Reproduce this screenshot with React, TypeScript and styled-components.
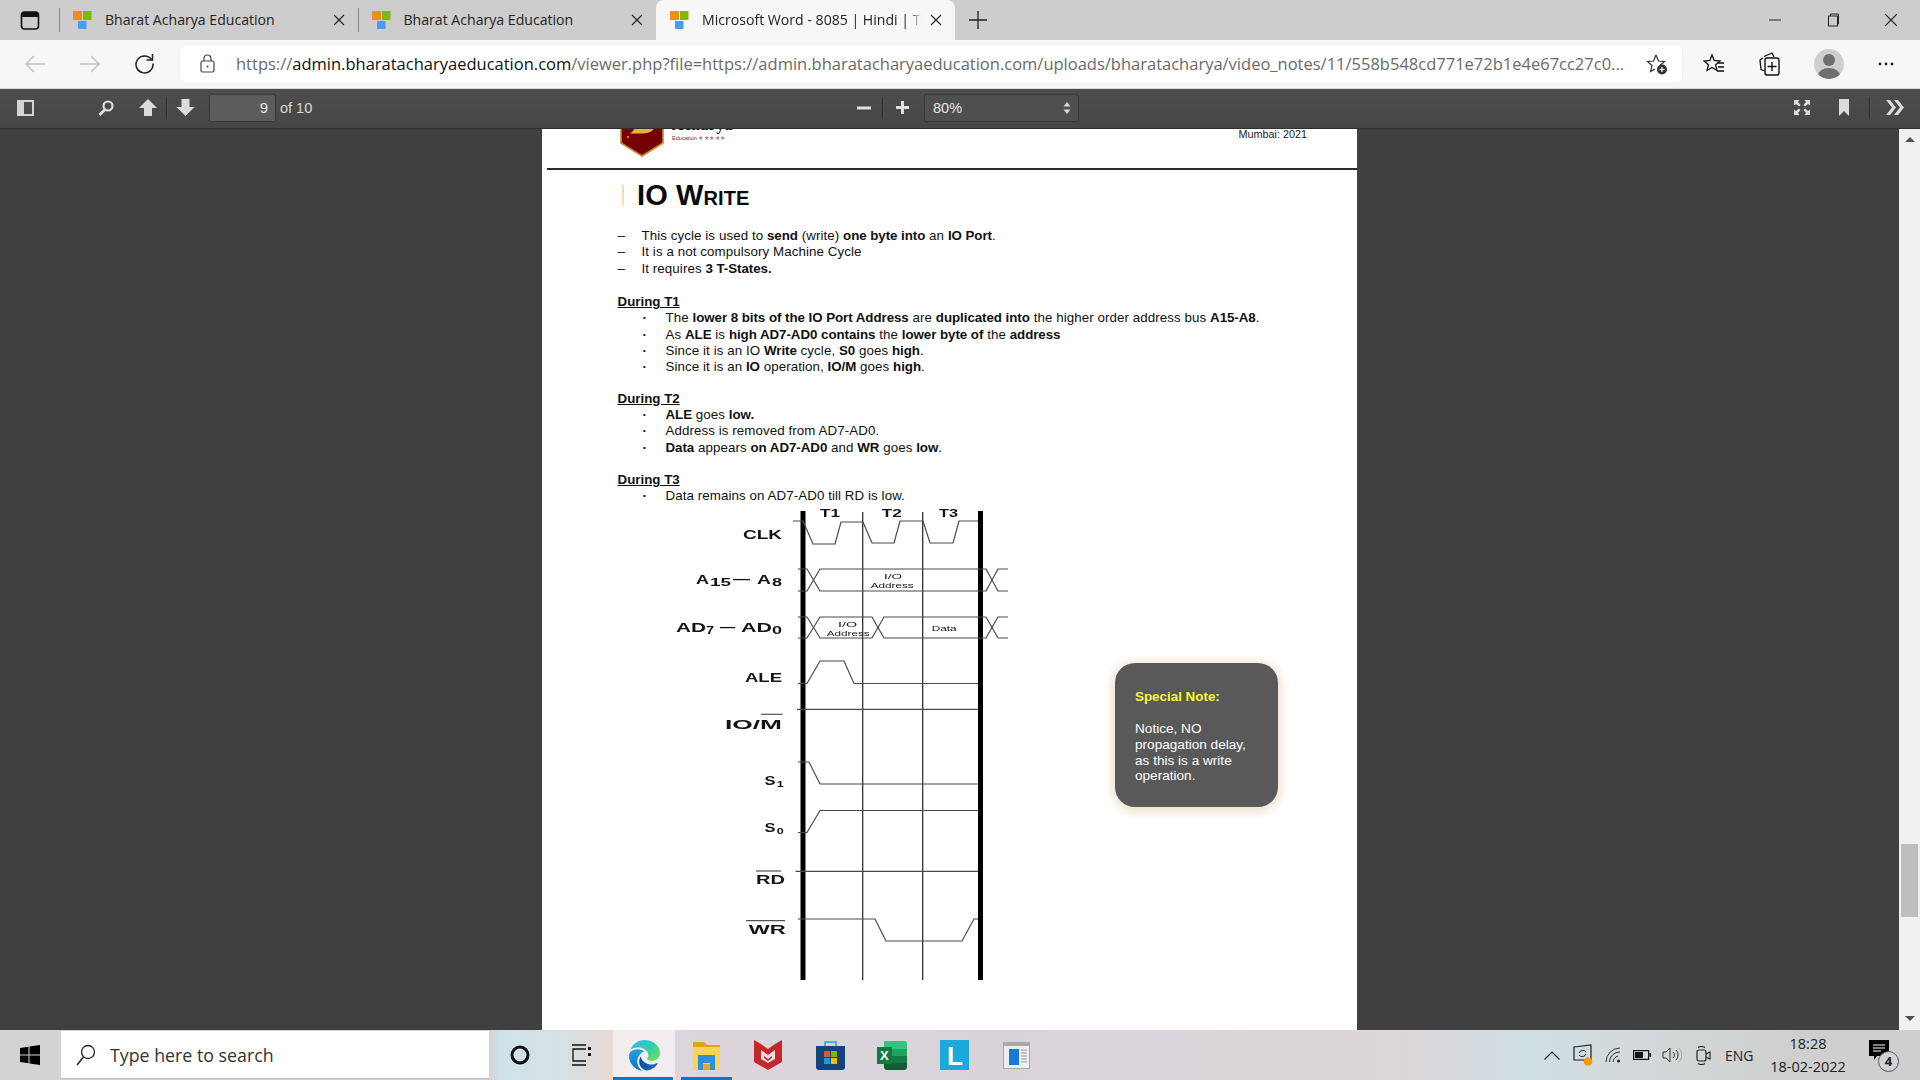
import React from "react";
import styled, { createGlobalStyle } from "styled-components";

const Global = createGlobalStyle`
  html, body { margin: 0; padding: 0; background: #404040; }
  * { box-sizing: border-box; }
`;

const Shell = styled.div`
  width: 1920px; height: 1080px; overflow: hidden; display: flex; flex-direction: column;
  font-family: "Open Sans", "Noto Sans", sans-serif; color: #111;
`;

/* ---------- tab strip ---------- */
const TabStrip = styled.div`
  height: 40px; flex: none; background: #cdcdcd; display: flex; align-items: stretch;
`;
const TabMenu = styled.div`
  width: 59px; flex: none; display: flex; align-items: center; padding-left: 20px;
  border-right: 1px solid transparent;
`;
const Tab = styled.div<{ $active?: boolean }>`
  width: 298.5px; flex: none; display: flex; align-items: center; padding: 0 13px 0 14px;
  background: ${(p) => (p.$active ? "#f7f7f7" : "transparent")};
  border-radius: ${(p) => (p.$active ? "8px 8px 0 0" : "0")};
  position: relative;
  ${(p) => (p.$active ? "" : "&::before { content: ''; position: absolute; left: 0; top: 8px; bottom: 8px; width: 1px; background: #8a8a8a; }")}
`;
const TabTitle = styled.div<{ $fade?: boolean }>`
  flex: 1; margin-left: 13px; font-size: 14.1px; white-space: nowrap; overflow: hidden; color: #222; line-height: 40px;
  ${(p) => (p.$fade ? "mask-image: linear-gradient(90deg, #000 94%, transparent 100%); margin-right: 8px;" : "")}
`;
const NewTab = styled.div`
  width: 40px; margin-left: 3px; display: flex; align-items: center; justify-content: center;
`;
const WindowControls = styled.div`
  margin-left: auto; display: flex; align-items: center; padding-right: 0;
`;
const WindowButton = styled.div`
  width: 58px; height: 40px; display: flex; align-items: center; justify-content: center;
`;

/* ---------- address row ---------- */
const AddressRow = styled.div`
  height: 49px; flex: none; background: #f7f7f7; display: flex; align-items: center;
  padding-bottom: 1px; border-bottom: 1px solid #dcdcdc;
`;
const NavButton = styled.div<{ $w: number; $ml: number }>`
  width: ${(p) => p.$w}px; margin-left: ${(p) => p.$ml}px; flex: none; display: flex; align-items: center; justify-content: center;
`;
const Omnibox = styled.div`
  width: 1502px; height: 38px; margin-left: 25px; flex: none; background: #fff; border-radius: 5px;
  display: flex; align-items: center; box-shadow: 0 0 3px rgba(0,0,0,.08);
`;
const UrlText = styled.div`
  margin-left: 21px; width: 1396px; flex: none; font-size: 16.5px; white-space: nowrap; overflow: hidden; color: #6a6a6a;
`;
const UrlHost = styled.span`
  color: #111;
`;
const Avatar = styled.div`
  width: 30px; height: 30px; margin-left: 33px; border-radius: 50%; background: #cfcfcf; flex: none; display: flex; align-items: center; justify-content: center; overflow: hidden;
`;

/* ---------- pdf toolbar ---------- */
const Toolbar = styled.div`
  height: 40px; flex: none; display: grid; grid-template-columns: 856px 224px 1fr; align-items: center; padding-bottom: 2px;
  background: linear-gradient(#4d4d4d, #464646); border-bottom: 1px solid #2f2f2f; color: #d9d9d9; font-family: "Liberation Sans", Arial, sans-serif;
`;
const ToolGroup = styled.div<{ $end?: boolean }>`
  display: flex; align-items: center; height: 100%;
  ${(p) => (p.$end ? "justify-content: flex-end; padding-right: 16px;" : "")}
`;
const ToolIcon = styled.div<{ $ml: number }>`
  margin-left: ${(p) => p.$ml}px; display: flex; align-items: center; flex: none;
`;
const ToolSep = styled.div<{ $ml: number }>`
  width: 1px; height: 22px; background: #2e2e2e; box-shadow: 1px 0 0 rgba(255,255,255,.06); margin-left: ${(p) => p.$ml}px; flex: none;
`;
const PageInput = styled.div`
  width: 67px; height: 28px; margin-left: 14px; background: #5c5c5c; border: 1px solid #383838; border-radius: 2px;
  font-size: 15px; text-align: right; line-height: 26px; padding-right: 7px; flex: none; color: #e2e2e2;
`;
const PageCount = styled.div`
  margin-left: 4px; font-size: 14.5px;
`;
const ZoomSelect = styled.div`
  width: 155px; height: 28px; margin-left: 15px; background: #4f4f4f; border: 1px solid #383838; border-radius: 2px;
  display: flex; align-items: center; justify-content: space-between; padding: 0 7px 0 8px; font-size: 14.5px; color: #e6e6e6; flex: none;
`;

/* ---------- viewer ---------- */
const Viewer = styled.div`
  flex: 1; min-height: 0; display: flex; background: #404040;
`;
const PageArea = styled.div`
  flex: 1; display: flex; justify-content: center; min-width: 0;
`;
const Page = styled.div`
  width: 815px; background: #fff; overflow: hidden; font-family: "Liberation Sans", Arial, sans-serif; color: #111;
`;
const ScrollBar = styled.div`
  width: 21px; flex: none; background: #f1f1f1; display: flex; flex-direction: column; align-items: center; padding: 8px 0 9px;
`;
const ScrollThumb = styled.div`
  width: 17px; height: 73px; background: #bebebe; margin-top: 702px;
`;
const ScrollArrow = styled.div<{ $down?: boolean }>`
  width: 0; height: 0; border-left: 5px solid transparent; border-right: 5px solid transparent;
  ${(p) => (p.$down ? "border-top: 5px solid #505050; margin-top: auto;" : "border-bottom: 5px solid #505050;")}
`;

const PageHeader = styled.div`
  height: 39px; display: flex; overflow: hidden; padding-left: 78px;
`;
const Brand = styled.div`
  margin-left: 8px; display: flex; flex-direction: column; width: 200px;
`;
const BrandName = styled.div`
  height: 3px; display: flex; align-items: flex-end; font-family: "Liberation Serif", serif; font-weight: 700; font-size: 16px; line-height: 14px; color: #111; letter-spacing: .3px;
`;
const BrandSub = styled.div`
  font-size: 5.6px; line-height: 6px; margin-top: 3px; color: #7c1b2f; white-space: nowrap;
`;
const BrandStars = styled.span`
  color: #a77; letter-spacing: .4px;
`;
const Edition = styled.div`
  margin-left: auto; margin-right: 50px; font-size: 10.8px; line-height: 11px; margin-top: 0; color: #222;
`;
const HeaderRule = styled.div`
  height: 2px; margin-left: 5px; background: #2b2b2b;
`;
const TitleRow = styled.div`
  display: flex; align-items: center; margin: 11px 0 0 80px; height: 28px;
`;
const TitleBar = styled.div`
  width: 2px; height: 21px; background: #fbdcae; flex: none;
`;
const Title = styled.h1`
  margin: 0 0 0 13px; font-size: 29px; line-height: 28px; font-weight: 700; font-variant: small-caps; color: #0a0a0a; letter-spacing: .1px;
`;
const Section = styled.div<{ $mt: number }>`
  margin-top: ${(p) => p.$mt}px; padding-left: 75.500px; font-size: 13.33px; line-height: 16.4px; letter-spacing: .08px;
`;
const SectionHead = styled.div`
  font-weight: 700; text-decoration: underline; line-height: 16px; letter-spacing: 0;
`;
const Line = styled.div<{ $kind: "dash" | "dot" }>`
  display: flex; white-space: pre;
  padding-left: ${(p) => (p.$kind === "dash" ? "0" : "25px")};
  &::before {
    content: "${(p) => (p.$kind === "dash" ? "–" : "·")}";
    width: ${(p) => (p.$kind === "dash" ? "24px" : "23px")};
    flex: none;
    font-weight: ${(p) => (p.$kind === "dot" ? 700 : 400)};
  }
`;
const LineText = styled.span`
  white-space: pre;
`;
const DiagramRow = styled.div`
  display: flex; align-items: flex-start; padding-left: 118px;
`;
const Diagram = styled.svg`
  width: 380px; height: 480px; flex: none; display: block; filter: blur(.3px);
`;
const Wave = styled.polyline<{ $w?: number; $c?: string }>`
  fill: none; stroke: ${(p) => p.$c ?? "#4a4a4a"}; stroke-width: ${(p) => p.$w ?? 1.2};
`;
const DiagramLabel = styled.text<{ $size?: number; $weight?: number }>`
  font-family: "Liberation Sans", Arial, sans-serif; font-size: ${(p) => p.$size ?? 12.5}px; font-weight: ${(p) => p.$weight ?? 700}; fill: #141414;
`;
const Note = styled.div`
  width: 163px; height: 144px; margin: 159px 0 0 75px; flex: none; background: #595959; border-radius: 20px;
  box-shadow: 0 2px 8px 4px #efe6d6; padding: 26px 20px 0 20px; color: #fff; font-size: 13.6px; line-height: 15.7px;
`;
const NoteTitle = styled.div`
  color: #f6f83a; font-weight: 700; margin-bottom: 16px; font-size: 13.4px;
`;

/* ---------- taskbar ---------- */
const Taskbar = styled.div`
  height: 50px; flex: none; display: flex; align-items: stretch;
  background: linear-gradient(90deg, #d3d3d3 0, #d3d3d3 489px, #cfe2ea 500px, #d6e0e2 560px, #e6d9d7 610px, #ddd6dc 680px, #d8d4da 1000px, #dcd6da 1250px, #ddd6da 1400px, #cfe0e4 1530px, #d3dadb 1620px, #cfcfcf 1800px, #cfcfcf 1920px);
`;
const StartButton = styled.div`
  width: 61px; flex: none; display: flex; align-items: center; justify-content: center; padding-right: 1px;
`;
const SearchBox = styled.div`
  width: 428px; flex: none; margin: 1px 0; background: #fff; display: flex; align-items: center; padding-left: 15px; border-bottom: 1px solid #bbb;
`;
const SearchText = styled.div`
  margin-left: 14px; font-size: 17.8px; color: #333;
`;
const TaskCell = styled.div<{ $active?: boolean; $open?: boolean }>`
  width: 62px; flex: none; display: flex; align-items: center; justify-content: center; position: relative;
  background: ${(p) => (p.$active ? "rgba(255,255,255,.55)" : "transparent")};
  ${(p) => (p.$active || p.$open ? `&::after { content: ''; position: absolute; left: ${p.$open ? 6 : 0}px; right: ${p.$open ? 5 : 2}px; bottom: 0; height: 3px; background: #0078d4; }` : "")}
`;
const Tray = styled.div`
  margin-left: auto; display: flex; align-items: center; padding-right: 19px; color: #222;
`;
const TrayIcon = styled.div<{ $ml: number }>`
  margin-left: ${(p) => p.$ml}px; display: flex; align-items: center; flex: none; position: relative;
`;
const TrayText = styled.div`
  margin-left: 14px; font-size: 14px; width: 28px; white-space: nowrap;
`;
const Clock = styled.div`
  margin-left: 15px; width: 80px; text-align: center; font-size: 14.5px; line-height: 23px;
`;
const Notify = styled.div`
  margin-left: 21px; width: 32px; height: 40px; position: relative; flex: none;
`;
const NotifyBadge = styled.div`
  position: absolute; left: 9px; top: 16px; width: 21px; height: 21px; border-radius: 50%; border: 1px solid #555; background: #d3d3d3;
  font-size: 13px; font-weight: 700; line-height: 19px; text-align: center; color: #222;
`;

/* ---------- icons ---------- */
const Favicon = () => (
  <svg width="19" height="18" viewBox="0 0 19 18">
    <rect x="0" y="0" width="9" height="9" fill="#f58a1f" />
    <rect x="10" y="0" width="8.5" height="9" fill="#7fba00" />
    <rect x="5" y="10" width="8.5" height="8" fill="#4a9cf0" />
  </svg>
);
const CloseX = ({ s = 12, c = "#222" }: { s?: number; c?: string }) => (
  <svg width={s} height={s} viewBox="0 0 12 12"><path d="M1 1l10 10M11 1L1 11" stroke={c} strokeWidth="1.1" fill="none" /></svg>
);
const Arrow = ({ flip }: { flip?: boolean }) => (
  <svg width="22" height="20" viewBox="0 0 22 20" style={flip ? { transform: "scaleX(-1)" } : undefined}>
    <path d="M21 10H2M10 2l-8 8 8 8" stroke="#c4c4c4" strokeWidth="1.5" fill="none" />
  </svg>
);

const EdgeIcon = () => (
  <svg width="31" height="31" viewBox="0 0 24 24">
    <defs>
      <linearGradient id="eg1" x1="0" y1="0" x2="1" y2=".9"><stop offset="0" stopColor="#2bb6ee" /><stop offset=".55" stopColor="#33cfae" /><stop offset="1" stopColor="#72e04c" /></linearGradient>
      <linearGradient id="eg2" x1="0" y1="0" x2="0" y2="1"><stop offset="0" stopColor="#1ca4ea" /><stop offset="1" stopColor="#1070c8" /></linearGradient>
      <linearGradient id="eg3" x1="0" y1="0" x2="1" y2="0"><stop offset="0" stopColor="#0d4f9c" /><stop offset="1" stopColor="#1a70c4" /></linearGradient>
    </defs>
    <path fill="url(#eg3)" d="M21.86 17.86q.14 0 .25.12.1.13.1.25t-.11.33l-.32.46-.43.53-.44.5q-.21.25-.38.42l-.22.23q-.58.53-1.34 1.04-.76.51-1.6.91-.86.4-1.74.64t-1.67.24q-.9 0-1.69-.28-.8-.28-1.48-.78-.68-.5-1.22-1.17-.53-.66-.92-1.44-.38-.77-.58-1.6-.2-.83-.2-1.67 0-1 .32-1.96.33-.97.87-1.8.14.95.55 1.77.41.82 1.02 1.5.6.68 1.38 1.21.78.54 1.64.9.86.36 1.77.56.92.2 1.8.2 1.12 0 2.18-.24 1.06-.23 2.06-.72l.2-.1.2-.05z" />
    <path fill="url(#eg2)" d="M6.360 16.590q0 1.1.27 2.15.27 1.06.78 2.03.51.96 1.24 1.77.74.82 1.66 1.4-1.47-.2-2.8-.74-1.33-.55-2.48-1.37-1.15-.83-2.08-1.9-.92-1.07-1.58-2.33T.36 14.94Q0 13.54 0 12.06q0-.81.32-1.49.31-.68.83-1.23.53-.55 1.2-.96.66-.4 1.35-.66.74-.27 1.5-.39.78-.12 1.55-.12.7 0 1.42.1.72.12 1.4.35.68.23 1.32.57.63.35 1.16.83-.35 0-.7.07-.33.07-.65.23v-.02q-.63.28-1.2.74-.57.46-1.05 1.04-.48.58-.87 1.26-.38.67-.65 1.39-.27.71-.42 1.44-.15.72-.15 1.38z" />
    <path fill="url(#eg1)" d="M11.96.06q1.7 0 3.33.39 1.63.38 3.07 1.15 1.43.77 2.62 1.93 1.18 1.16 1.98 2.7.49.94.76 1.96.28 1 .28 2.08 0 .89-.23 1.7-.24.8-.69 1.48-.45.68-1.1 1.22-.64.53-1.45.88-.54.24-1.11.36-.58.13-1.16.13-.42 0-.97-.03-.54-.03-1.1-.12-.55-.1-1.05-.28-.5-.19-.84-.5-.12-.09-.23-.24-.1-.16-.1-.33 0-.15.16-.35.16-.2.35-.5.2-.28.36-.68.16-.4.16-.95 0-1.06-.4-1.96-.4-.91-1.06-1.64-.66-.74-1.52-1.28-.86-.55-1.79-.89-.84-.3-1.72-.44-.87-.14-1.76-.14-1.55 0-3.06.45T.94 7.55q.71-1.74 1.81-3.13 1.1-1.38 2.52-2.35Q6.68 1.1 8.37.58q1.7-.52 3.58-.52z" />
  </svg>
);
const FolderIcon = () => (
  <svg width="27" height="29" viewBox="0 0 27 29">
    <path d="M0 1h11l3 3h13v5H0z" fill="#e0a21a" />
    <path d="M0 6h27v23H0z" fill="#fbd25a" />
    <path d="M5 14h17v15h-5v-7h-7v7H5z" fill="#2f8fe0" />
    <path d="M10 23h7v6h-7z" fill="#e8a914" />
  </svg>
);
const McAfeeIcon = () => (
  <svg width="28" height="30" viewBox="0 0 28 30">
    <path d="M0 0l7 4 7 5 7-5 7-4v22l-14 8-14-8z" fill="#c3282d" />
    <path d="M7 10l7 5 7-5v9l-7 4-7-4z" fill="#e9dfe2" />
    <path d="M10 16l4 3 4-3v2l-4 3-4-3z" fill="#c3282d" />
  </svg>
);
const StoreIcon = () => (
  <svg width="29" height="30" viewBox="0 0 29 30">
    <path d="M9 6V2h11v4" fill="none" stroke="#3fb4e6" strokeWidth="2" />
    <path d="M0 6h29v21a3 3 0 0 1-3 3H3a3 3 0 0 1-3-3z" fill="#17427a" />
    <rect x="8" y="11" width="6" height="6" fill="#e8552d" />
    <rect x="15" y="11" width="6" height="6" fill="#7fba00" />
    <rect x="8" y="18" width="6" height="6" fill="#0f9de0" />
    <rect x="15" y="18" width="6" height="6" fill="#ffb900" />
  </svg>
);
const ExcelGlyph = styled.text`
  font-family: "Liberation Sans", sans-serif; font-size: 13px; font-weight: 700; fill: #fff;
`;
const ExcelIcon = () => (
  <svg width="30" height="29" viewBox="0 0 30 29">
    <path d="M7 0h20a3 3 0 0 1 3 3v5H7z" fill="#33c481" />
    <path d="M7 8h23v7H7z" fill="#21a366" />
    <path d="M7 15h23v7H7z" fill="#107c41" />
    <path d="M7 22h23v4a3 3 0 0 1-3 3H10a3 3 0 0 1-3-3z" fill="#185c37" />
    <rect x="0" y="6" width="15" height="17" fill="#107c41" />
    <ExcelGlyph x="3" y="19">X</ExcelGlyph>
  </svg>
);
const LGlyph = styled.text`
  font-family: "Liberation Sans", sans-serif; font-size: 26px; font-weight: 700; fill: #fff;
`;
const LIcon = () => (
  <svg width="29" height="30" viewBox="0 0 29 30">
    <rect width="29" height="30" fill="#1ca8d8" />
    <LGlyph x="7" y="25">L</LGlyph>
  </svg>
);
const DocIcon = () => (
  <svg width="27" height="27" viewBox="0 0 27 27">
    <rect x=".5" y=".5" width="26" height="26" fill="#eceff0" stroke="#a8a8a8" />
    <rect x="1" y="1" width="25" height="3" fill="#a9a9a9" />
    <rect x="6" y="7" width="10" height="16" fill="#1878d8" />
    <path d="M18 8h6M18 11h6M18 14h6M18 17h6M18 20h6" stroke="#9a9a9a" />
  </svg>
);

const labelProps = (x: number, y: number, w: number) => ({ x, y, textLength: w, lengthAdjust: "spacingAndGlyphs" as const });

const TimingDiagram = () => (
  <Diagram viewBox="0 4 380 480">
    <Wave points="143,11 143,480" $w={5} $c="#000" />
    <Wave points="320.500,11 320.500,480" $w={5} $c="#000" />
    <Wave points="202.700,12 202.700,480" $w={1.3} $c="#333" />
    <Wave points="262.700,12 262.700,480" $w={1.3} $c="#333" />

    <Wave points="133,21 143,21 153,44 175,44 181,22 203,22 212,43 234,43 240,21 263,21 270,43 293,43 299,21 318,21" />
    <Wave points="138,69 147,69 160,91 318,91" />
    <Wave points="138,91 147,91 160,69 318,69" />
    <Wave points="318,69 326,69 338,91 348,91" />
    <Wave points="318,91 326,91 338,69 348,69" />
    <Wave points="138,117 147,117 160,138 212,138 224,117 318,117" />
    <Wave points="138,138 147,138 160,117 212,117 224,138 318,138" />
    <Wave points="318,117 326,117 338,138 348,138" />
    <Wave points="318,138 326,138 338,117 348,117" />
    <Wave points="138,183.500 147,183.500 160,161 184,161 194,183.500 318,183.500" />
    <Wave points="137,209.300 318,209.300" />
    <Wave points="138,262 149,262 160,284 318,284" />
    <Wave points="138,332.500 147,332.500 160,310.500 318,310.500" />
    <Wave points="135.500,371.300 318,371.300" />
    <Wave points="138,419 215,419 226,441 302,441 314,419 318,419" />

    <DiagramLabel {...labelProps(160, 16.7, 20)} $size={11}>T1</DiagramLabel>
    <DiagramLabel {...labelProps(221.7, 16.7, 20)} $size={11}>T2</DiagramLabel>
    <DiagramLabel {...labelProps(279, 16.7, 19)} $size={11}>T3</DiagramLabel>

    <DiagramLabel {...labelProps(83, 38.5, 39)} $size={13}>CLK</DiagramLabel>
    <DiagramLabel {...labelProps(36, 84, 13)} $size={13}>A</DiagramLabel>
    <DiagramLabel {...labelProps(50, 86, 21)} $size={11}>15</DiagramLabel>
    <DiagramLabel {...labelProps(73, 83, 17)}>—</DiagramLabel>
    <DiagramLabel {...labelProps(97, 84, 14)} $size={13}>A</DiagramLabel>
    <DiagramLabel {...labelProps(112, 86, 10)} $size={11}>8</DiagramLabel>
    <DiagramLabel {...labelProps(16, 132, 30)} $size={13}>AD</DiagramLabel>
    <DiagramLabel {...labelProps(46, 134, 8)} $size={11}>7</DiagramLabel>
    <DiagramLabel {...labelProps(60, 131, 15)}>—</DiagramLabel>
    <DiagramLabel {...labelProps(81, 132, 31)} $size={13}>AD</DiagramLabel>
    <DiagramLabel {...labelProps(112, 134, 10)} $size={11}>0</DiagramLabel>
    <DiagramLabel {...labelProps(85, 181.7, 37)} $size={13}>ALE</DiagramLabel>
    <DiagramLabel {...labelProps(65, 228.7, 57)} $size={13}>IO/M</DiagramLabel>
    <Wave points="101,214.300 122.700,214.300" $c="#555" />
    <DiagramLabel {...labelProps(104.5, 285, 11)} $size={13}>S</DiagramLabel>
    <DiagramLabel {...labelProps(116.7, 286.7, 7)} $size={9}>1</DiagramLabel>
    <DiagramLabel {...labelProps(104.5, 332, 11)} $size={13}>S</DiagramLabel>
    <DiagramLabel {...labelProps(116.7, 334, 7)} $size={9}>0</DiagramLabel>
    <DiagramLabel {...labelProps(96, 384.3, 29)} $size={13}>RD</DiagramLabel>
    <Wave points="96,371 121,371" $c="#555" />
    <DiagramLabel {...labelProps(88.7, 434, 37)} $size={13}>WR</DiagramLabel>
    <Wave points="86,420.700 125,420.700" $c="#555" />

    <DiagramLabel {...labelProps(224, 78.7, 18)} $size={7} $weight={400}>I/O</DiagramLabel>
    <DiagramLabel {...labelProps(210.7, 87.7, 43)} $size={7} $weight={400}>Address</DiagramLabel>
    <DiagramLabel {...labelProps(178, 126.7, 19)} $size={7} $weight={400}>I/O</DiagramLabel>
    <DiagramLabel {...labelProps(166.7, 135.7, 43)} $size={7} $weight={400}>Address</DiagramLabel>
    <DiagramLabel {...labelProps(271.7, 131, 25)} $size={7} $weight={400}>Data</DiagramLabel>
  </Diagram>
);

const B = styled.b`font-weight: 700; letter-spacing: -.05px;`;

export default function App() {
  return (
    <Shell>
      <Global />
      <TabStrip>
        <TabMenu>
          <svg width="20" height="19" viewBox="0 0 20 19">
            <rect x="1.500" y="1" width="17" height="17" rx="3" fill="none" stroke="#111" strokeWidth="1.6" />
            <path d="M1.500 4a3 3 0 0 1 3-3h11a3 3 0 0 1 3 3v2h-17z" fill="#111" />
          </svg>
        </TabMenu>
        <Tab><Favicon /><TabTitle>Bharat Acharya Education</TabTitle><CloseX /></Tab>
        <Tab><Favicon /><TabTitle>Bharat Acharya Education</TabTitle><CloseX /></Tab>
        <Tab $active><Favicon /><TabTitle $fade>Microsoft Word - 8085 | Hindi | Timing Diagram</TabTitle><CloseX /></Tab>
        <NewTab>
          <svg width="18" height="18" viewBox="0 0 18 18"><path d="M9 0v18M0 9h18" stroke="#222" strokeWidth="1.3" /></svg>
        </NewTab>
        <WindowControls>
          <WindowButton><svg width="14" height="2" viewBox="0 0 14 2"><path d="M1 1h12" stroke="#222" strokeWidth="1" /></svg></WindowButton>
          <WindowButton>
            <svg width="14" height="14" viewBox="0 0 14 14"><rect x="2.500" y="3" width="9" height="10" fill="none" stroke="#222" /><path d="M4.500 3V1h8v10h-1" fill="none" stroke="#222" /></svg>
          </WindowButton>
          <WindowButton><CloseX s={14} /></WindowButton>
        </WindowControls>
      </TabStrip>

      <AddressRow>
        <NavButton $w={22} $ml={24}><Arrow /></NavButton>
        <NavButton $w={22} $ml={33}><Arrow flip /></NavButton>
        <NavButton $w={22} $ml={32}>
          <svg width="21" height="21" viewBox="0 0 21 21"><path d="M17.500 6.500A8.500 8.500 0 1 0 19 10.500" fill="none" stroke="#222" strokeWidth="1.5" /><path d="M18.500 1v6h-6" fill="none" stroke="#222" strokeWidth="1.5" /></svg>
        </NavButton>
        <Omnibox>
          <NavButton $w={15} $ml={20}>
            <svg width="15" height="19" viewBox="0 0 15 19"><rect x="1" y="7" width="13" height="11" rx="1.500" fill="none" stroke="#444" strokeWidth="1.2" /><path d="M4 7V4.500a3.500 3.500 0 0 1 7 0V7" fill="none" stroke="#444" strokeWidth="1.2" /><circle cx="7.500" cy="12.500" r="1" fill="#444" /></svg>
          </NavButton>
          <UrlText>https://<UrlHost>admin.bharatacharyaeducation.com</UrlHost>/viewer.php?file=https://admin.bharatacharyaeducation.com/uploads/bharatacharya/video_notes/11/558b548cd771e72b1e4e67cc27c0...</UrlText>
          <NavButton $w={22} $ml={14}>
            <svg width="22" height="22" viewBox="0 0 22 22"><path d="M10 2l2.500 6 6 .5-4.500 4 1 3M10 2L7.500 8l-6 .5 4.500 4-1.400 6 4.400-2.500" fill="none" stroke="#333" strokeWidth="1.2" /><circle cx="16" cy="16.500" r="5" fill="#333" /><path d="M16 14v5M13.500 16.500h5" stroke="#fff" strokeWidth="1.2" /></svg>
          </NavButton>
        </Omnibox>
        <NavButton $w={22} $ml={21}>
          <svg width="22" height="22" viewBox="0 0 22 22"><path d="M9 2l2.200 5.500 5.800.5-4.400 3.800 1.400 5.700L9 14.500l-5 3 1.400-5.700L1 8l5.800-.5z" fill="none" stroke="#111" strokeWidth="1.3" /><path d="M15 10h6M15 14h6M14 18h7" stroke="#111" strokeWidth="1.3" /></svg>
        </NavButton>
        <NavButton $w={22} $ml={34}>
          <svg width="22" height="24" viewBox="0 0 22 24"><path d="M5 4.500L13 1l2 4M6 19l-4-1.500L1 8l3-2" fill="none" stroke="#111" strokeWidth="1.3" /><rect x="6" y="6" width="14" height="17" rx="2" fill="none" stroke="#111" strokeWidth="1.4" /><path d="M13 10v9M8.500 14.500h9" stroke="#111" strokeWidth="1.4" /></svg>
        </NavButton>
        <Avatar>
          <svg width="30" height="30" viewBox="0 0 30 30"><circle cx="15" cy="11" r="6" fill="#6f6f6f" /><ellipse cx="15" cy="27" rx="11" ry="8" fill="#6f6f6f" /></svg>
        </Avatar>
        <NavButton $w={20} $ml={32}>
          <svg width="18" height="4" viewBox="0 0 18 4"><circle cx="3" cy="2" r="1.400" fill="#222" /><circle cx="9" cy="2" r="1.400" fill="#222" /><circle cx="15" cy="2" r="1.400" fill="#222" /></svg>
        </NavButton>
      </AddressRow>

      <Toolbar>
        <ToolGroup>
          <ToolIcon $ml={17}>
            <svg width="17" height="16" viewBox="0 0 17 16"><rect x="1" y="1" width="15" height="14" fill="none" stroke="#d4d4d4" strokeWidth="2" /><rect x="2" y="2" width="5" height="12" fill="#d4d4d4" /></svg>
          </ToolIcon>
          <ToolIcon $ml={63}>
            <svg width="18" height="16" viewBox="0 0 18 16"><circle cx="11" cy="6" r="4.500" fill="none" stroke="#dedede" strokeWidth="2.200" /><path d="M8 9.500L2.500 15" stroke="#dedede" strokeWidth="2.600" /></svg>
          </ToolIcon>
          <ToolIcon $ml={24}>
            <svg width="18" height="17" viewBox="0 0 18 17"><path d="M9 0l9 9h-5v8H5V9H0z" fill="#dcdcdc" /></svg>
          </ToolIcon>
          <ToolSep $ml={9} />
          <ToolIcon $ml={9}>
            <svg width="19" height="17" viewBox="0 0 18 17"><path d="M9 17L0 8h5V0h8v8h5z" fill="#dcdcdc" /></svg>
          </ToolIcon>
          <PageInput>9</PageInput>
          <PageCount>of 10</PageCount>
        </ToolGroup>
        <ToolGroup>
          <ToolIcon $ml={1}><svg width="14" height="4" viewBox="0 0 14 4"><rect width="14" height="3" y=".5" fill="#e0e0e0" /></svg></ToolIcon>
          <ToolSep $ml={11} />
          <ToolIcon $ml={13}><svg width="13" height="13" viewBox="0 0 13 13"><path d="M5 0h3v5h5v3H8v5H5V8H0V5h5z" fill="#e0e0e0" /></svg></ToolIcon>
          <ZoomSelect>
            80%
            <svg width="8" height="12" viewBox="0 0 8 12"><path d="M4 0l3.500 4.500h-7zM4 12L.5 7.500h7z" fill="#d8d8d8" /></svg>
          </ZoomSelect>
        </ToolGroup>
        <ToolGroup $end>
          <ToolIcon $ml={0}>
            <svg width="18" height="17" viewBox="0 0 18 17"><path d="M1 1h5.500L5 3l2.500 3-1.500 1.500L3 5 1 6.500zM17 1h-5.500L13 3l-2.500 3L12 7.500 15 5l2 1.500zM1 16h5.500L5 14l2.500-3L6 9.500 3 12l-2-1.500zM17 16h-5.500L13 14l-2.500-3L12 9.500l3 2.500 2-1.500z" fill="#dcdcdc" /></svg>
          </ToolIcon>
          <ToolIcon $ml={28}>
            <svg width="10" height="17" viewBox="0 0 10 17"><path d="M0 0h10v17l-5-5-5 5z" fill="#dcdcdc" /></svg>
          </ToolIcon>
          <ToolSep $ml={20} />
          <ToolIcon $ml={16}>
            <svg width="18" height="15" viewBox="0 0 18 15"><path d="M0 0h4l6 7.500L4 15H0l6-7.500zM8 0h4l6 7.500L12 15H8l6-7.500z" fill="#dcdcdc" /></svg>
          </ToolIcon>
        </ToolGroup>
      </Toolbar>

      <Viewer>
        <PageArea>
          <Page>
            <PageHeader>
              <svg width="44" height="28" viewBox="0 0 44 28">
                <path d="M1 -10H43V14L22 27 1 14z" fill="#750000" stroke="#c98a2c" strokeWidth="1.6" />
                <path d="M13 -3H35L33 1Q29 4.500 22 4.500H10L14 1z" fill="#e8b33a" />
                <circle cx="8" cy="8" r="1" fill="#e8b33a" />
              </svg>
              <Brand>
                <BrandName>Acharya</BrandName>
                <BrandSub>Education <BrandStars>★★★★★</BrandStars></BrandSub>
              </Brand>
              <Edition>Mumbai: 2021</Edition>
            </PageHeader>
            <HeaderRule />
            <TitleRow><TitleBar /><Title>IO Write</Title></TitleRow>
            <Section $mt={19}>
              <Line $kind="dash"><LineText>This cycle is used to <B>send</B> (write) <B>one byte into</B> an <B>IO Port</B>.</LineText></Line>
              <Line $kind="dash"><LineText>It is a not compulsory Machine Cycle</LineText></Line>
              <Line $kind="dash"><LineText>It requires <B>3 T-States.</B></LineText></Line>
            </Section>
            <Section $mt={17}>
              <SectionHead>During T1</SectionHead>
              <Line $kind="dot"><LineText>The <B>lower 8 bits of the IO Port Address</B> are <B>duplicated into</B> the higher order address bus <B>A15-A8</B>.</LineText></Line>
              <Line $kind="dot"><LineText>As <B>ALE</B> is <B>high AD7-AD0 contains</B> the <B>lower byte of</B> the <B>address</B></LineText></Line>
              <Line $kind="dot"><LineText>Since it is an IO <B>Write</B> cycle, <B>S0</B> goes <B>high</B>.</LineText></Line>
              <Line $kind="dot"><LineText>Since it is an <B>IO</B> operation, <B>IO/M</B> goes <B>high</B>.</LineText></Line>
            </Section>
            <Section $mt={15}>
              <SectionHead>During T2</SectionHead>
              <Line $kind="dot"><LineText><B>ALE</B> goes <B>low.</B></LineText></Line>
              <Line $kind="dot"><LineText>Address is removed from AD7-AD0.</LineText></Line>
              <Line $kind="dot"><LineText><B>Data</B> appears <B>on AD7-AD0</B> and <B>WR</B> goes <B>low</B>.</LineText></Line>
            </Section>
            <Section $mt={16}>
              <SectionHead>During T3</SectionHead>
              <Line $kind="dot"><LineText>Data remains on AD7-AD0 till RD is low.</LineText></Line>
            </Section>
            <DiagramRow>
              <TimingDiagram />
              <Note>
                <NoteTitle>Special Note:</NoteTitle>
                Notice, NO propagation delay, as this is a write operation.
              </Note>
            </DiagramRow>
          </Page>
        </PageArea>
        <ScrollBar>
          <ScrollArrow />
          <ScrollThumb />
          <ScrollArrow $down />
        </ScrollBar>
      </Viewer>

      <Taskbar>
        <StartButton>
          <svg width="20" height="20" viewBox="0 0 20 20"><path d="M0 3l8.500-1.300V9.500H0zM9.500 1.500L20 0v9.500H9.500zM0 10.500h8.500v7.800L0 17zM9.500 10.500H20V20L9.500 18.500z" fill="#000" /></svg>
        </StartButton>
        <SearchBox>
          <svg width="20" height="22" viewBox="0 0 20 22"><circle cx="12" cy="8" r="6.500" fill="none" stroke="#222" strokeWidth="1.3" /><path d="M7.500 13L1 21" stroke="#222" strokeWidth="1.5" /></svg>
          <SearchText>Type here to search</SearchText>
        </SearchBox>
        <TaskCell>
          <svg width="20" height="20" viewBox="0 0 20 20"><circle cx="10" cy="10" r="8" fill="none" stroke="#111" strokeWidth="3" /></svg>
        </TaskCell>
        <TaskCell>
          <svg width="20" height="22" viewBox="0 0 20 22"><path d="M0 1h14M0 21h14M14 5H1v12h13" fill="none" stroke="#111" strokeWidth="1.300" /><rect x="16" y="3" width="3" height="3" fill="#111" /><rect x="16" y="9" width="3" height="3" fill="#111" /></svg>
        </TaskCell>
        <TaskCell $active><EdgeIcon /></TaskCell>
        <TaskCell $open><FolderIcon /></TaskCell>
        <TaskCell><McAfeeIcon /></TaskCell>
        <TaskCell><StoreIcon /></TaskCell>
        <TaskCell><ExcelIcon /></TaskCell>
        <TaskCell><LIcon /></TaskCell>
        <TaskCell><DocIcon /></TaskCell>
        <Tray>
          <TrayIcon $ml={0}><svg width="16" height="9" viewBox="0 0 16 9"><path d="M.5 8.500L8 1l7.500 7.500" fill="none" stroke="#222" strokeWidth="1.200" /></svg></TrayIcon>
          <TrayIcon $ml={13}>
            <svg width="20" height="22" viewBox="0 0 20 22"><path d="M1 3l17-2v15H1z" fill="none" stroke="#222" strokeWidth="1.200" /><path d="M6 9a4 4 0 0 1 7-1M13 10a4 4 0 0 1-7 1" fill="none" stroke="#222" /><circle cx="15" cy="17.500" r="4.300" fill="#ff9800" /></svg>
          </TrayIcon>
          <TrayIcon $ml={12}>
            <svg width="16" height="16" viewBox="0 0 16 16"><path d="M1 15A14 14 0 0 1 15 1M4.500 15A10 10 0 0 1 15 5M8 15a7 7 0 0 1 5-6" fill="none" stroke="#333" strokeWidth="1" /><circle cx="13.500" cy="14" r="1.500" fill="#222" /></svg>
          </TrayIcon>
          <TrayIcon $ml={12}>
            <svg width="18" height="10" viewBox="0 0 18 10"><rect x=".6" y=".6" width="15" height="8.800" fill="none" stroke="#111" strokeWidth="1.200" /><rect x="2" y="2" width="8" height="6" fill="#111" /><rect x="16.500" y="3" width="1.500" height="4" fill="#111" /></svg>
          </TrayIcon>
          <TrayIcon $ml={11}>
            <svg width="20" height="16" viewBox="0 0 20 16"><path d="M1 5h3l4-4v14l-4-4H1z" fill="none" stroke="#333" /><path d="M11 5a4 4 0 0 1 0 6M14 3a7 7 0 0 1 0 10" fill="none" stroke="#333" /><path d="M17 1a10 10 0 0 1 0 14" fill="none" stroke="#aaa" /></svg>
          </TrayIcon>
          <TrayIcon $ml={14}>
            <svg width="15" height="19" viewBox="0 0 15 19"><rect x="1" y="4" width="9" height="11" rx="2" fill="none" stroke="#222" strokeWidth="1.200" /><path d="M10 8l4-2v7l-4-2M2 1.500a7 7 0 0 1 7 0M2 17.500a7 7 0 0 0 7 0" fill="none" stroke="#222" strokeWidth="1.100" /></svg>
          </TrayIcon>
          <TrayText>ENG</TrayText>
          <Clock>18:28<br />18-02-2022</Clock>
          <Notify>
            <svg width="20" height="20" viewBox="0 0 20 20" style={{ marginTop: 5 }}><path d="M0 0h20v16H8l-3 4v-4H0z" fill="#000" /><path d="M4 5h12M4 8h12M4 11h8" stroke="#fff" strokeWidth="1" /></svg>
            <NotifyBadge>4</NotifyBadge>
          </Notify>
        </Tray>
      </Taskbar>
    </Shell>
  );
}
